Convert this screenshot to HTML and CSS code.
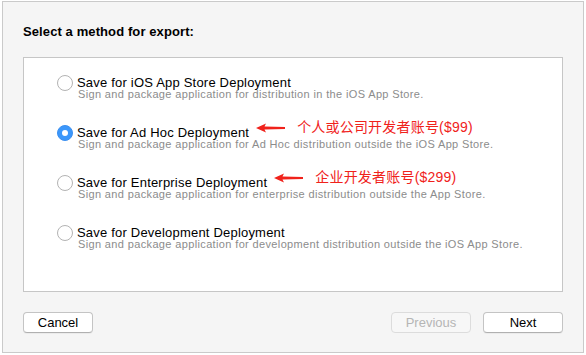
FILE: index.html
```html
<!DOCTYPE html>
<html lang="en">
<head>
    <meta charset="UTF-8">
    <meta name="viewport" content="width=device-width, initial-scale=1.0">
    <title>Export</title>
    <link rel="stylesheet" href="styles.css">
</head>
<body>
    <div class="window">
        <h1 class="heading">Select a method for export:</h1>

        <div class="panel">
            <label class="option">
                <span class="radio"></span>
                <span class="option-text">
                    <span class="option-title">Save for iOS App Store Deployment</span>
                    <span class="option-desc">Sign and package application for distribution in the iOS App Store.</span>
                </span>
            </label>

            <label class="option">
                <span class="radio checked"></span>
                <span class="option-text">
                    <span class="option-title">Save for Ad Hoc Deployment
                        <span class="note">
                            <svg class="arrow" width="30" height="10" viewBox="0 0 30 10">
                                <path d="M0 5 L10 0.5 L8.5 3.6 L29 3.9 L29 6.1 L8.5 6.4 L10 9.5 Z" fill="#f0221b"/>
                            </svg>
                            <span class="note-text">个人或公司开发者账号($99)</span>
                        </span>
                    </span>
                    <span class="option-desc">Sign and package application for Ad Hoc distribution outside the iOS App Store.</span>
                </span>
            </label>

            <label class="option">
                <span class="radio"></span>
                <span class="option-text">
                    <span class="option-title">Save for Enterprise Deployment
                        <span class="note">
                            <svg class="arrow" width="30" height="10" viewBox="0 0 30 10">
                                <path d="M0 5 L10 0.5 L8.5 3.6 L29 3.9 L29 6.1 L8.5 6.4 L10 9.5 Z" fill="#f0221b"/>
                            </svg>
                            <span class="note-text">企业开发者账号($299)</span>
                        </span>
                    </span>
                    <span class="option-desc">Sign and package application for enterprise distribution outside the App Store.</span>
                </span>
            </label>

            <label class="option">
                <span class="radio"></span>
                <span class="option-text">
                    <span class="option-title">Save for Development Deployment</span>
                    <span class="option-desc">Sign and package application for development distribution outside the iOS App Store.</span>
                </span>
            </label>
        </div>

        <div class="actions">
            <button class="btn">Cancel</button>
            <div class="spacer"></div>
            <button class="btn" disabled>Previous</button>
            <button class="btn">Next</button>
        </div>
    </div>
</body>
</html>
```

FILE: styles.css
```css
* {
    box-sizing: border-box;
}
body {
    margin: 0;
    padding: 0;
    background-color: #fff;
    font-family: "Liberation Sans", Arial, sans-serif;
    color: #000;
}
.window {
    width: 582px;
    height: 352px;
    margin: 1px 0 0 2px;
    padding: 22px 20px 0 20px;
    background-color: #f5f5f5;
    border: 1px solid #cacaca;
}
.heading {
    margin: 0 0 17px 0;
    font-size: 13px;
    line-height: 16px;
    font-weight: bold;
    letter-spacing: 0.1px;
}
.panel {
    height: 235px;
    padding: 18px 0 0 33px;
    background-color: #fff;
    border: 1px solid #c6c6c6;
    display: flex;
    flex-direction: column;
    gap: 26px;
}
.option {
    display: flex;
    align-items: flex-start;
    gap: 4px;
}
.radio {
    width: 16px;
    height: 16px;
    margin-top: -1px;
    border: 1px solid #b3b3b3;
    border-radius: 50%;
    background-color: #fff;
    flex-shrink: 0;
    display: flex;
    align-items: center;
    justify-content: center;
}
.radio.checked {
    background-color: #3b97fb;
    border-color: #3b8ff0;
}
.radio.checked::after {
    content: "";
    width: 6px;
    height: 6px;
    border-radius: 50%;
    background-color: #fff;
}
.option-text {
    display: flex;
    flex-direction: column;
}
.option-title {
    display: flex;
    align-items: center;
    font-size: 13px;
    line-height: 13px;
    height: 13px;
    letter-spacing: 0.2px;
}
.option-desc {
    font-size: 11px;
    line-height: 11px;
    color: #8c8c8c;
    padding-left: 1px;
    letter-spacing: 0.36px;
}
.note {
    display: inline-flex;
    align-items: center;
    margin: -10px 0 0 7px;
    gap: 11px;
    letter-spacing: 0;
}
.note-text {
    font-family: "Liberation Sans", "Noto Sans CJK SC", sans-serif;
    font-size: 14px;
    color: #f0221b;
    letter-spacing: 0.2px;
}
.actions {
    display: flex;
    gap: 12px;
    margin-top: 20px;
}
.spacer {
    flex: 1;
}
.btn {
    height: 21px;
    width: 80px;
    padding: 0;
    font-family: "Liberation Sans", Arial, sans-serif;
    font-size: 13px;
    color: #000;
    background-color: #fff;
    border: 1px solid #c4c4c4;
    border-bottom-color: #b0b0b0;
    border-radius: 4px;
    box-shadow: 0 1px 0 rgba(0, 0, 0, 0.04);
}
.btn:first-child {
    width: 70px;
}
.btn:disabled {
    color: #b5b5b5;
    background-color: #f7f7f7;
    border-color: #dcdcdc;
    box-shadow: none;
}
```
